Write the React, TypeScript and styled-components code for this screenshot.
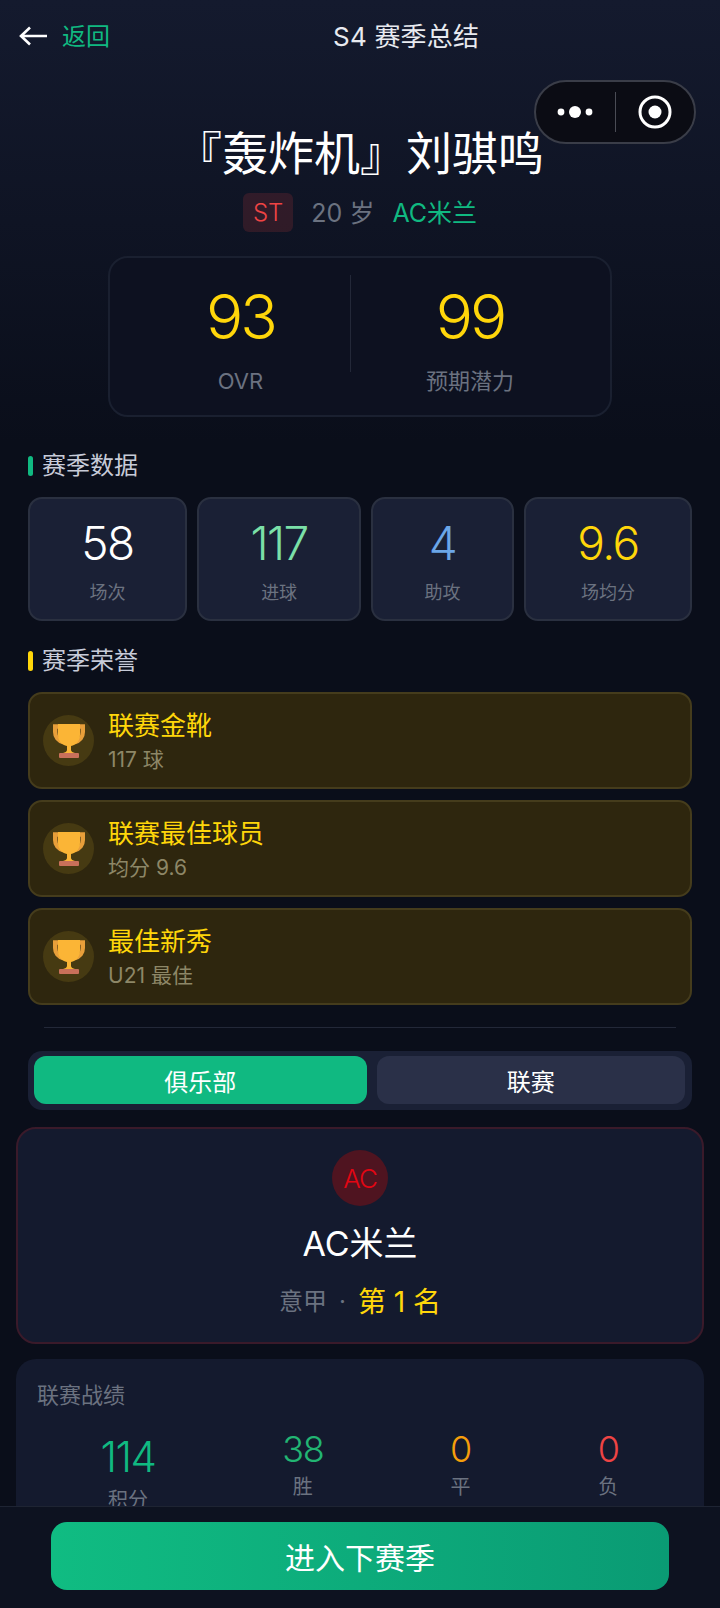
import styled, { createGlobalStyle } from "styled-components";

const GlobalStyles = createGlobalStyle`
* { margin: 0; padding: 0; box-sizing: border-box; }
html, body { width: 720px; height: 1608px; overflow: hidden; background: #0a0e1a; }
body { font-family: "Inter", "Noto Sans CJK SC", sans-serif; font-weight: 400; color: #fff; }
`;

const Page = styled.div`
  position: relative;
  width: 720px;
  height: 1608px;
  overflow: hidden;
  background: #0a0e1a;
`;

const Hero = styled.div`
  height: 443px;
  background: linear-gradient(180deg, #141a2e 0%, #0a0e1a 100%);
`;

const NavBar = styled.div`
  display: flex;
  align-items: center;
  height: 72px;
  padding: 0 0 3px 19px;
`;

const BackLink = styled.div`
  display: flex;
  align-items: center;
  gap: 15px;
  width: 240px;
  font-size: 24px;
  color: #10b981;
`;

const ArrowIcon = styled.svg`
  margin-top: 3px;
`;

const NavTitle = styled.div`
  font-size: 26px;
  letter-spacing: 0.2px;
  color: #e8eaf0;
  margin-left: 74px;
`;

const Capsule = styled.div`
  position: absolute;
  left: 534px;
  top: 80px;
  width: 162px;
  height: 64px;
  border-radius: 32px;
  background: #0b0c14;
  border: 2px solid #3a3d48;
  display: flex;
  align-items: center;
`;

const CapsuleSide = styled.div`
  flex: 1;
  display: flex;
  align-items: center;
  justify-content: center;
`;

const CapsuleRule = styled.div`
  width: 1px;
  height: 40px;
  background: #4a4c55;
`;

const PlayerName = styled.h1`
  font-size: 46px;
  font-weight: 400;
  line-height: 60px;
  text-align: center;
  margin-top: 51px;
`;

const MetaRow = styled.div`
  display: flex;
  align-items: center;
  justify-content: center;
  gap: 18px;
  margin-top: 10px;
  font-size: 25px;
  color: #6b7280;
`;

const MetaText = styled.span<{ $color?: string }>`
  padding-bottom: 3px;
  color: ${(p) => p.$color ?? "inherit"};
`;

const PosTag = styled.span`
  padding: 2px 10px;
  height: 39px;
  line-height: 35px;
  font-size: 24px;
  font-weight: 300;
  border-radius: 6px;
  color: #ef4444;
  background: rgba(239, 68, 68, 0.15);
`;

const RatingCard = styled.div`
  display: flex;
  align-items: flex-start;
  justify-content: center;
  gap: 75px;
  width: 504px;
  height: 161px;
  margin: 24px auto 0;
  border: 2px solid #1a2030;
  border-radius: 20px;
  background: #0d1120;
`;

const RatingCell = styled.div`
  display: flex;
  flex-direction: column;
  align-items: center;
  padding-top: 22px;
`;

const RatingValue = styled.div`
  font-size: 62px;
  font-weight: 300;
  line-height: 74px;
  letter-spacing: -3px;
  color: #ffd60a;
`;

const RatingLabel = styled.div`
  font-size: 22px;
  line-height: 34px;
  margin-top: 10px;
  color: #6b7280;
`;

const RatingRule = styled.div`
  width: 1px;
  height: 97px;
  margin-top: 17px;
  background: #232838;
`;

const Section = styled.section<{ $gap?: number }>`
  padding: 0 28px;
  margin-top: ${(p) => p.$gap ?? 0}px;
`;

const SectionTitle = styled.h2<{ $bar: string }>`
  display: flex;
  align-items: center;
  gap: 9px;
  height: 40px;
  font-size: 24px;
  font-weight: 400;
  color: #c7cbd8;

  &::before {
    content: "";
    width: 5px;
    height: 20px;
    margin-top: 6px;
    border-radius: 3px;
    background: ${(p) => p.$bar};
  }
`;

const StatRow = styled.div`
  display: flex;
  gap: 10px;
  margin-top: 14px;
`;

const StatCell = styled.div`
  flex: 1 1 auto;
  height: 124px;
  display: flex;
  flex-direction: column;
  align-items: center;
  background: #1a2035;
  border: 2px solid #2a3040;
  border-radius: 14px;
  padding-top: 14px;
`;

const StatValue = styled.div<{ $color: string }>`
  font-size: 46px;
  font-weight: 300;
  line-height: 60px;
  letter-spacing: -1.5px;
  color: ${(p) => p.$color};
`;

const StatLabel = styled.div`
  font-size: 18px;
  line-height: 26px;
  margin-top: 7px;
  color: #6b7280;
`;

const HonorList = styled.div`
  display: flex;
  flex-direction: column;
  gap: 11px;
  margin-top: 14px;
`;

const HonorCard = styled.div`
  display: flex;
  align-items: center;
  gap: 14px;
  height: 97px;
  padding-left: 13px;
  background: #2e260e;
  border: 2px solid #453c1c;
  border-radius: 14px;
`;

const HonorBadge = styled.div`
  width: 51px;
  height: 51px;
  flex: none;
  border-radius: 50%;
  background: #463a12;
  display: flex;
  align-items: center;
  justify-content: center;
`;

const HonorName = styled.div`
  font-size: 26px;
  line-height: 37px;
  color: #ffd60a;
`;

const HonorNote = styled.div`
  font-size: 21px;
  line-height: 28px;
  margin-top: 2px;
  color: #8d8767;
`;

const Divider = styled.div`
  height: 1px;
  margin: 22px 44px 23px;
  background: #232838;
`;

const TabBar = styled.div`
  display: flex;
  gap: 10px;
  margin: 0 28px;
  height: 59px;
  padding: 5px 7px 6px 6px;
  border-radius: 14px;
  background: #1a2035;
`;

const Tab = styled.div<{ $active?: boolean }>`
  flex: 1 1 auto;
  display: flex;
  align-items: center;
  justify-content: center;
  font-size: 24px;
  border-radius: 12px;
  color: #fff;
  background: ${(p) => (p.$active ? "#10b981" : "#2a3048")};
`;

const ClubCard = styled.div`
  display: flex;
  flex-direction: column;
  align-items: center;
  height: 217px;
  margin: 17px 16px 0;
  padding-top: 21px;
  background: #141a2e;
  border: 2px solid #3a1a2a;
  border-radius: 20px;
`;

const ClubBadge = styled.div`
  width: 56px;
  height: 56px;
  border-radius: 50%;
  display: flex;
  align-items: center;
  justify-content: center;
  font-size: 26px;
  font-weight: 300;
  letter-spacing: -1px;
  color: #e30613;
  background: #4f1420;
`;

const ClubTitle = styled.div`
  font-size: 34px;
  line-height: 48px;
  margin-top: 14px;
`;

const ClubRank = styled.div`
  display: flex;
  align-items: center;
  gap: 12px;
  margin-top: 12px;
  font-size: 24px;
  line-height: 44px;
  color: #6b7280;
`;

const RankValue = styled.span`
  font-size: 28px;
  color: #ffd60a;
`;

const RecordCard = styled.div`
  margin: 15px 16px 0;
  height: 300px;
  padding: 20px 22px 20px 21px;
  background: #141a2e;
  border-radius: 20px;
`;

const RecordTitle = styled.div`
  font-size: 22px;
  line-height: 32px;
  color: #6b7280;
`;

const RecordRow = styled.div`
  display: flex;
  justify-content: space-around;
  align-items: flex-start;
  margin-top: 16px;
`;

const RecordItem = styled.div<{ $drop?: boolean }>`
  display: flex;
  flex-direction: column;
  align-items: center;
  margin-top: ${(p) => (p.$drop ? 3 : 0)}px;
`;

const RecordValue = styled.div<{ $color: string; $big?: boolean }>`
  font-size: ${(p) => (p.$big ? 42 : 36)}px;
  font-weight: 300;
  line-height: ${(p) => (p.$big ? 54 : 44)}px;
  letter-spacing: -1.5px;
  color: ${(p) => p.$color};
`;

const RecordLabel = styled.div`
  font-size: 20px;
  line-height: 28px;
  margin-top: 2px;
  color: #6b7280;
`;

const Footer = styled.div`
  position: absolute;
  left: 0;
  right: 0;
  bottom: 0;
  height: 102px;
  padding: 15px 51px 0;
  background: #0d1220;
  border-top: 1px solid #1e2433;
`;

const NextButton = styled.div`
  height: 68px;
  display: flex;
  align-items: center;
  justify-content: center;
  font-size: 30px;
  color: #fff;
  border-radius: 16px;
  background: linear-gradient(90deg, #10bc82 0%, #0a9b74 100%);
`;

function BackArrow() {
  return (
    <ArrowIcon width="28" height="20" viewBox="0 0 28 20" fill="none" stroke="#fff" strokeWidth="2.6">
      <path d="M28 10H2M11 1.5 2 10l9 8.5" />
    </ArrowIcon>
  );
}

function Trophy() {
  return (
    <svg width="32" height="34" viewBox="0 0 32 34">
      <path d="M6 2.5H2.200V8c0 5 3 9 8 10" fill="none" stroke="#e89f3a" strokeWidth="4.400" />
      <path d="M26 2.500h3.800V8c0 5-3 9-8 10" fill="none" stroke="#e89f3a" strokeWidth="4.400" />
      <path d="M5 0h22v11c0 6-4 10-9 11v4c0 1.500 2 2.500 4 3H10c2-.5 4-1.500 4-3v-4C9 21 5 17 5 11z" fill="#fbb536" />
      <rect x="6" y="29" width="20" height="5" rx="1" fill="#c8705a" />
    </svg>
  );
}

const honors = [
  { name: "联赛金靴", note: "117 球" },
  { name: "联赛最佳球员", note: "均分 9.6" },
  { name: "最佳新秀", note: "U21 最佳" },
];

export default function App() {
  return (
    <Page>
      <GlobalStyles />
      <Hero>
        <NavBar>
          <BackLink>
            <BackArrow />
            返回
          </BackLink>
          <NavTitle>S4 赛季总结</NavTitle>
        </NavBar>
        <PlayerName>『轰炸机』刘骐鸣</PlayerName>
        <MetaRow>
          <PosTag>ST</PosTag>
          <MetaText>20 岁</MetaText>
          <MetaText $color="#10b981">AC米兰</MetaText>
        </MetaRow>
        <RatingCard>
          <RatingCell>
            <RatingValue>93</RatingValue>
            <RatingLabel>OVR</RatingLabel>
          </RatingCell>
          <RatingRule />
          <RatingCell>
            <RatingValue>99</RatingValue>
            <RatingLabel>预期潜力</RatingLabel>
          </RatingCell>
        </RatingCard>
      </Hero>
      <Capsule>
        <CapsuleSide>
          <svg width="36" height="14" viewBox="0 0 36 14" fill="#fff">
            <circle cx="4" cy="7" r="3.4" />
            <circle cx="18" cy="7" r="6" />
            <circle cx="32" cy="7" r="3.4" />
          </svg>
        </CapsuleSide>
        <CapsuleRule />
        <CapsuleSide>
          <svg width="34" height="34" viewBox="0 0 34 34" fill="none">
            <circle cx="17" cy="17" r="15" stroke="#fff" strokeWidth="3" />
            <circle cx="17" cy="17" r="6.500" fill="#fff" />
          </svg>
        </CapsuleSide>
      </Capsule>
      <Section>
        <SectionTitle $bar="#10b981">赛季数据</SectionTitle>
        <StatRow>
          <StatCell>
            <StatValue $color="#ffffff">58</StatValue>
            <StatLabel>场次</StatLabel>
          </StatCell>
          <StatCell>
            <StatValue $color="#7be0a8">117</StatValue>
            <StatLabel>进球</StatLabel>
          </StatCell>
          <StatCell>
            <StatValue $color="#6ba6e8">4</StatValue>
            <StatLabel>助攻</StatLabel>
          </StatCell>
          <StatCell>
            <StatValue $color="#ffd60a">9.6</StatValue>
            <StatLabel>场均分</StatLabel>
          </StatCell>
        </StatRow>
      </Section>
      <Section $gap={17}>
        <SectionTitle $bar="#ffd60a">赛季荣誉</SectionTitle>
        <HonorList>
          {honors.map((h) => (
            <HonorCard key={h.name}>
              <HonorBadge>
                <Trophy />
              </HonorBadge>
              <div>
                <HonorName>{h.name}</HonorName>
                <HonorNote>{h.note}</HonorNote>
              </div>
            </HonorCard>
          ))}
        </HonorList>
      </Section>
      <Divider />
      <TabBar>
        <Tab $active>俱乐部</Tab>
        <Tab>联赛</Tab>
      </TabBar>
      <ClubCard>
        <ClubBadge>AC</ClubBadge>
        <ClubTitle>AC米兰</ClubTitle>
        <ClubRank>
          <span>意甲</span>
          <span>·</span>
          <RankValue>第 1 名</RankValue>
        </ClubRank>
      </ClubCard>
      <RecordCard>
        <RecordTitle>联赛战绩</RecordTitle>
        <RecordRow>
          <RecordItem $drop>
            <RecordValue $big $color="#10b981">114</RecordValue>
            <RecordLabel>积分</RecordLabel>
          </RecordItem>
          <RecordItem>
            <RecordValue $color="#22b573">38</RecordValue>
            <RecordLabel>胜</RecordLabel>
          </RecordItem>
          <RecordItem>
            <RecordValue $color="#f59e0b">0</RecordValue>
            <RecordLabel>平</RecordLabel>
          </RecordItem>
          <RecordItem>
            <RecordValue $color="#ef4444">0</RecordValue>
            <RecordLabel>负</RecordLabel>
          </RecordItem>
        </RecordRow>
      </RecordCard>
      <Footer>
        <NextButton>进入下赛季</NextButton>
      </Footer>
    </Page>
  );
}
